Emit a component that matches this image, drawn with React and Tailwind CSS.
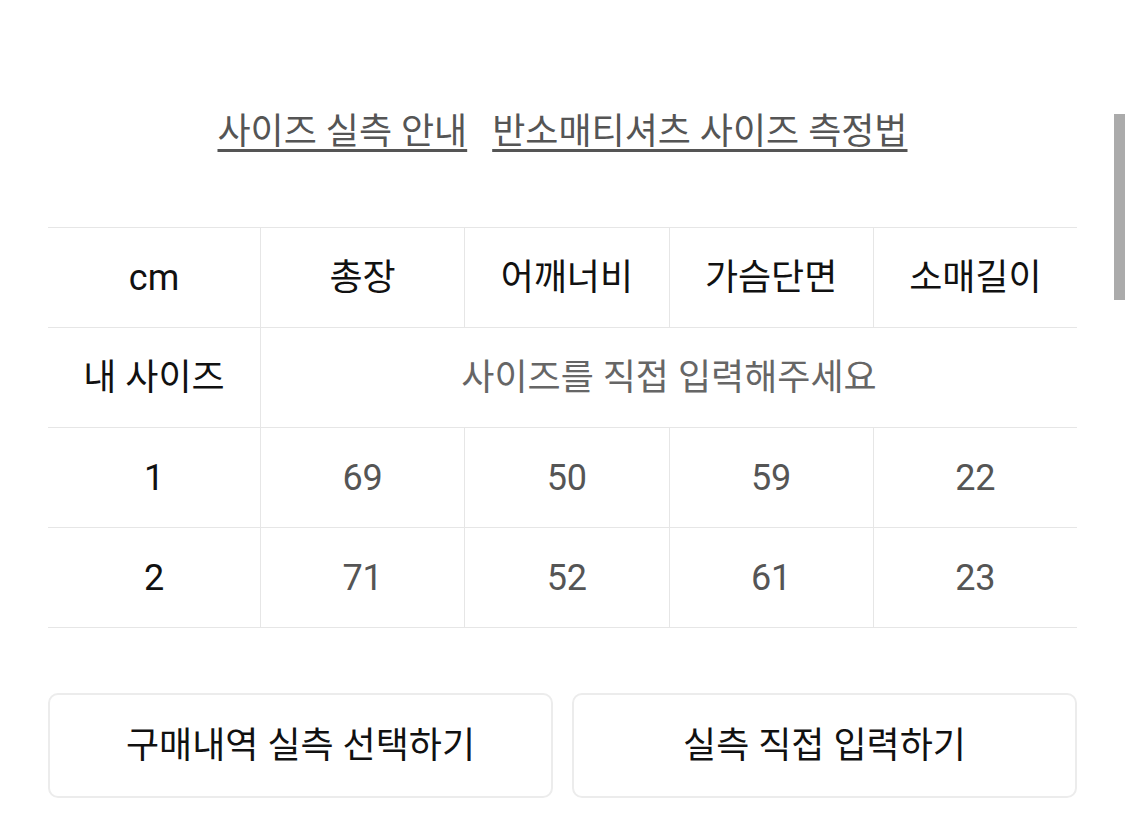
import React from 'react';

const font = { fontFamily: 'Roboto, "Noto Sans CJK KR", "Noto Sans", sans-serif' };

const headers = ['총장', '어깨너비', '가슴단면', '소매길이'];
const rows = [
  { size: '1', values: [69, 50, 59, 22] },
  { size: '2', values: [71, 52, 61, 23] },
];

function Cell({ children, className = '' }) {
  return (
    <div className={`h-[100px] flex items-center justify-center border-b border-[#e6e6e6] ${className}`}>
      {children}
    </div>
  );
}

export default function App() {
  return (
    <div className="relative min-h-[816px] bg-white px-12 pt-[110px]" style={font}>
      <div className="flex justify-center gap-[25px] text-[36px] leading-[44px] text-[#555]">
        <a className="underline decoration-[3px] underline-offset-[5px]">사이즈 실측 안내</a>
        <a className="underline decoration-[3px] underline-offset-[5px]">반소매티셔츠 사이즈 측정법</a>
      </div>

      <div className="mt-[73px] grid grid-cols-[212px_1fr_1fr_1fr_1fr] border-t border-[#e6e6e6] text-[36px]">
        <Cell className="text-[#111]">cm</Cell>
        {headers.map((h) => (
          <Cell key={h} className="border-l text-[#111]">{h}</Cell>
        ))}

        <Cell className="text-[#111]">내 사이즈</Cell>
        <Cell className="col-span-4 border-l text-[#666]">사이즈를 직접 입력해주세요</Cell>

        {rows.map((r) => (
          <React.Fragment key={r.size}>
            <Cell className="text-[#111]">{r.size}</Cell>
            {r.values.map((v, i) => (
              <Cell key={i} className="border-l text-[#555]">{v}</Cell>
            ))}
          </React.Fragment>
        ))}
      </div>

      <div className="mt-[65px] grid grid-cols-2 gap-[19px]">
        <button className="h-[105px] rounded-[10px] border-2 border-[#ececec] text-[36px] text-[#111]">
          구매내역 실측 선택하기
        </button>
        <button className="h-[105px] rounded-[10px] border-2 border-[#ececec] text-[36px] text-[#111]">
          실측 직접 입력하기
        </button>
      </div>

      <div className="absolute right-0 top-[114px] h-[186px] w-[11px] bg-[#ababab]" />
    </div>
  );
}
